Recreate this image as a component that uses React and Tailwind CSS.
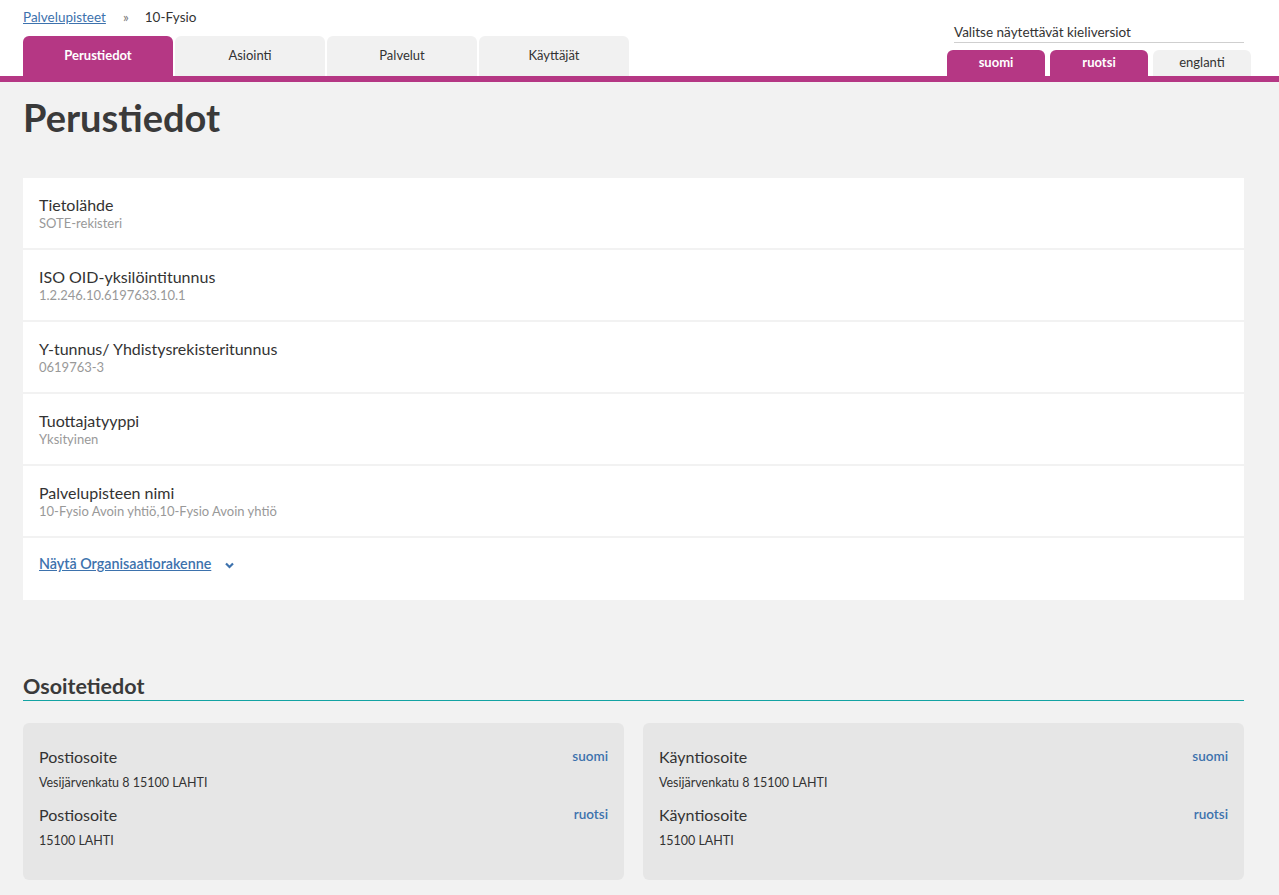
const font = { fontFamily: "Lato, 'Noto Sans', 'Liberation Sans', sans-serif" };

const mainTabs = ["Perustiedot", "Asiointi", "Palvelut", "Käyttäjät"];
const langTabs = [
  { label: "suomi", active: true },
  { label: "ruotsi", active: true },
  { label: "englanti", active: false },
];

const rows = [
  { label: "Tietolähde", value: "SOTE-rekisteri" },
  { label: "ISO OID-yksilöintitunnus", value: "1.2.246.10.6197633.10.1" },
  { label: "Y-tunnus/ Yhdistysrekisteritunnus", value: "0619763-3" },
  { label: "Tuottajatyyppi", value: "Yksityinen" },
  { label: "Palvelupisteen nimi", value: "10-Fysio Avoin yhtiö,10-Fysio Avoin yhtiö" },
];

function AddressCard({ title }) {
  const items = [
    { lang: "suomi", text: "Vesijärvenkatu 8 15100 LAHTI" },
    { lang: "ruotsi", text: "15100 LAHTI" },
  ];
  return (
    <div className="flex flex-1 flex-col gap-[14px] rounded-md bg-[#e6e6e6] px-4 pt-[24px] pb-[31px]">
      {items.map((it) => (
        <div key={it.lang}>
          <div className="flex items-start justify-between">
            <span className="text-[16px] leading-[20px] text-[#333]">{title}</span>
            <span className="text-[13.5px] font-semibold leading-[18px] text-[#3d72ad]">{it.lang}</span>
          </div>
          <div className="mt-[8px] text-[12.5px] leading-[16px] text-[#333]">{it.text}</div>
        </div>
      ))}
    </div>
  );
}

export default function App() {
  return (
    <div className="min-h-screen bg-[#f2f2f2] text-[#333]" style={font}>
      <header className="bg-white">
        <div className="flex justify-between pl-[23px] pr-[28px]">
          <div>
            <div className="flex h-[36px] items-center pb-[2px] text-[13.5px]">
              <a href="#" className="text-[#3d72ad] underline">Palvelupisteet</a>
              <span className="ml-[17px] text-[#777]">»</span>
              <span className="ml-[16px] text-[#333]">10-Fysio</span>
            </div>
            <div className="flex gap-[2px]">
              {mainTabs.map((t, i) => (
                <div
                  key={t}
                  className={
                    i === 0
                      ? "flex h-[40px] w-[150px] items-center justify-center rounded-t-md bg-[#b53784] text-[13px] font-bold text-white"
                      : "flex h-[40px] w-[150px] items-center justify-center rounded-t-md bg-[#f1f1f1] text-[13px] text-[#333]"
                  }
                >
                  {t}
                </div>
              ))}
            </div>
          </div>
          <div className="w-[304px] pt-[24px]">
            <div className="mx-[7px] border-b border-[#cfcfcf] pb-[1px] text-[13.5px] leading-[17px] text-[#333]">
              Valitse näytettävät kieliversiot
            </div>
            <div className="mt-[7px] flex gap-[5px]">
              {langTabs.map((l) => (
                <div
                  key={l.label}
                  className={
                    l.active
                      ? "flex h-[26px] w-[98px] items-center justify-center rounded-t-md bg-[#b53784] text-[13px] font-bold text-white"
                      : "flex h-[26px] w-[98px] items-center justify-center rounded-t-md bg-[#f1f1f1] text-[13px] text-[#333]"
                  }
                >
                  {l.label}
                </div>
              ))}
            </div>
          </div>
        </div>
        <div className="h-[6px] bg-[#b53784]" />
      </header>

      <main className="ml-[23px] w-[1221px] pb-[15px]">
        <h1 className="pt-[12px] text-[38px] font-bold leading-[46px] text-[#3a3a3a]">Perustiedot</h1>

        <div className="mt-[38px] flex flex-col gap-[2px] bg-[#f2f2f2]">
          {rows.map((r) => (
            <div key={r.label} className="h-[70px] bg-white px-4 pt-[16px]">
              <div className="text-[16px] leading-[21px] text-[#333]">{r.label}</div>
              <div className="text-[13px] leading-[17px] text-[#999]">{r.value}</div>
            </div>
          ))}
          <div className="flex h-[62px] items-start gap-[14px] bg-white px-4 pt-[16px]">
            <a href="#" className="text-[14.3px] font-semibold leading-[20px] text-[#3d72ad] underline">
              Näytä Organisaatiorakenne
            </a>
            <svg width="9" height="7" viewBox="0 0 9 7" className="mt-[8px]">
              <path d="M1 1.5 L4.5 5 L8 1.5" fill="none" stroke="#3d72ad" strokeWidth="2.2" />
            </svg>
          </div>
        </div>

        <h2 className="mt-[74px] border-b border-[#13a3a3] pb-[1px] text-[21.5px] font-bold leading-[25px] text-[#3a3a3a]">
          Osoitetiedot
        </h2>

        <div className="mt-[22px] flex gap-[19px]">
          <AddressCard title="Postiosoite" />
          <AddressCard title="Käyntiosoite" />
        </div>
      </main>
    </div>
  );
}
